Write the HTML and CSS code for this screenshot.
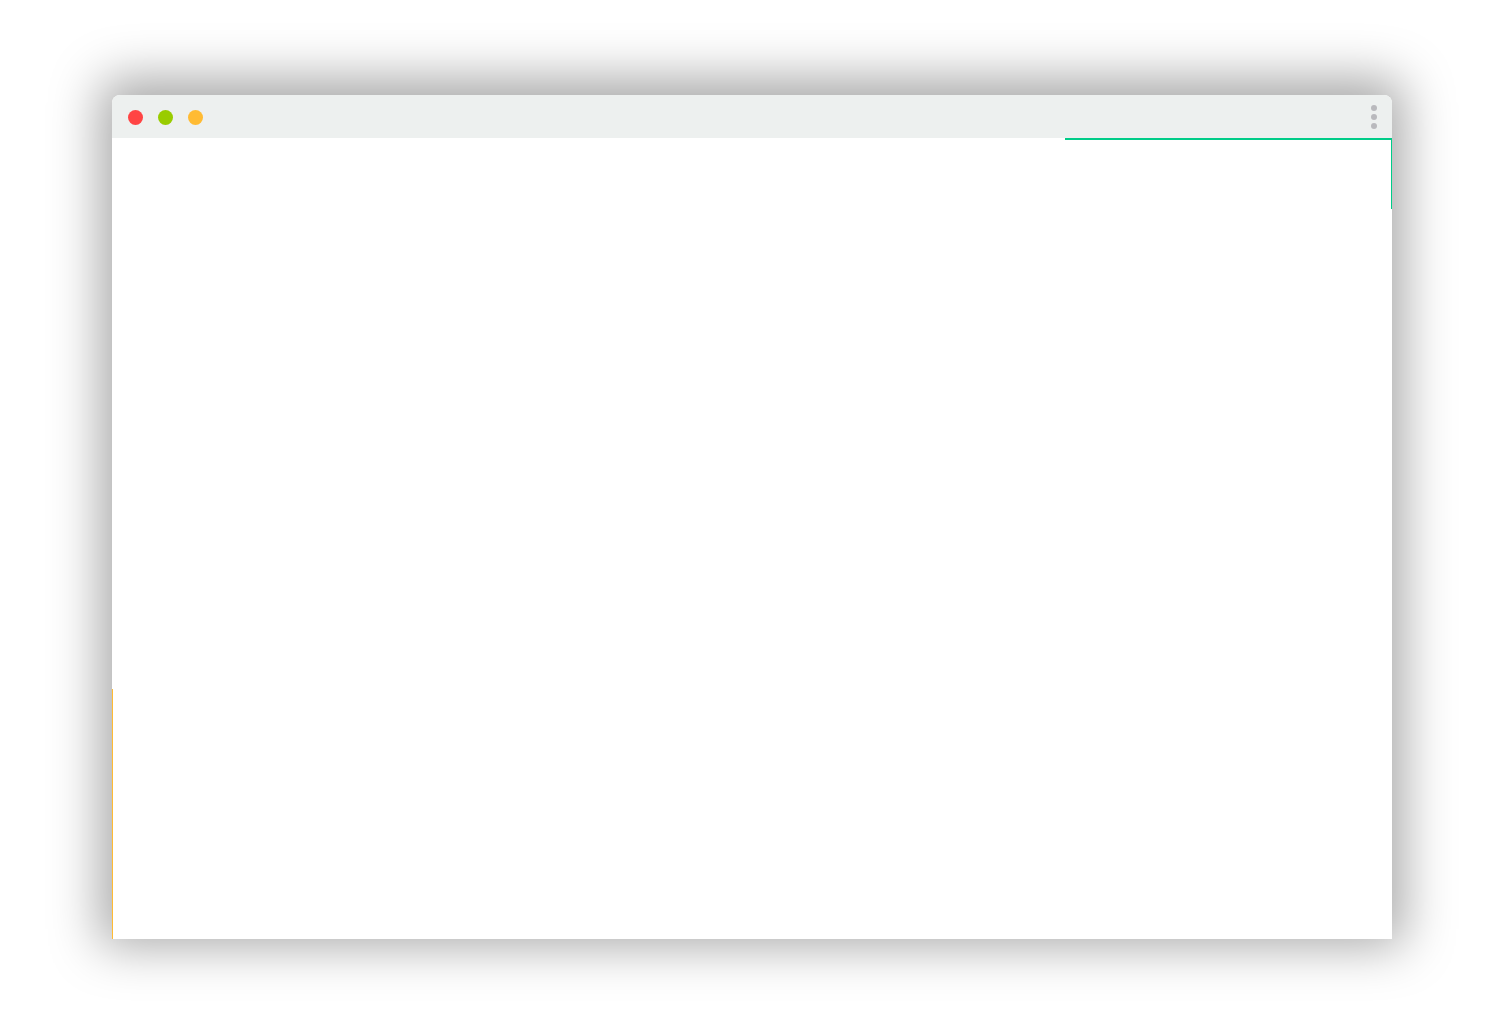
FILE: index.html
```html
<!DOCTYPE html>
<html lang="en">
<head>
<meta charset="utf-8">
<title>Window</title>
<link rel="stylesheet" href="styles.css">
</head>
<body>
<div class="stage">
  <div class="window">
    <div class="titlebar">
      <div class="lights">
        <span class="light red"></span>
        <span class="light green"></span>
        <span class="light orange"></span>
      </div>
      <div class="menu">
        <span class="mdot"></span>
        <span class="mdot"></span>
        <span class="mdot"></span>
      </div>
    </div>
    <div class="content">
      <div class="progress-top"></div>
      <div class="progress-right"></div>
      <div class="progress-left"></div>
    </div>
  </div>
</div>
</body>
</html>
```
FILE: styles.css
```css
html, body {
  margin: 0;
  padding: 0;
  background: #ffffff;
  font-family: "Liberation Sans", Arial, sans-serif;
}
.stage {
  width: 1504px;
  height: 1018px;
  padding: 95px 0 0 112px;
  box-sizing: border-box;
  overflow: hidden;
}
.window {
  width: 1280px;
  height: 844px;
  border-radius: 8px 8px 0 0;
  background: #ffffff;
  box-shadow: 0 -5px 50px 12px rgba(0,0,0,0.34);
  display: flex;
  flex-direction: column;
}
.titlebar {
  height: 43px;
  flex: none;
  background: #edf0ef;
  border-radius: 8px 8px 0 0;
  display: flex;
  align-items: center;
  justify-content: space-between;
  padding: 0 15px 0 16px;
}
.lights {
  display: flex;
  gap: 15px;
  margin-top: 1px;
}
.light {
  width: 15px;
  height: 15px;
  border-radius: 50%;
  display: block;
}
.red { background: #ff4444; }
.green { background: #99cc00; }
.orange { background: #ffbb33; }
.menu {
  display: flex;
  flex-direction: column;
  gap: 3px;
  margin-top: 1px;
}
.mdot {
  width: 6px;
  height: 6px;
  border-radius: 50%;
  background: #b9b9bd;
  display: block;
}
.content {
  flex: 1;
  position: relative;
  background: #ffffff;
}
.progress-top {
  position: absolute;
  top: 0;
  left: 953px;
  right: 0;
  height: 2px;
  background: #00cc88;
}
.progress-right {
  position: absolute;
  top: 0;
  right: 0;
  width: 1px;
  height: 71px;
  background: #00cc88;
}
.progress-left {
  position: absolute;
  bottom: 0;
  left: 0;
  width: 1px;
  height: 250px;
  background: #ffbb33;
}
```
